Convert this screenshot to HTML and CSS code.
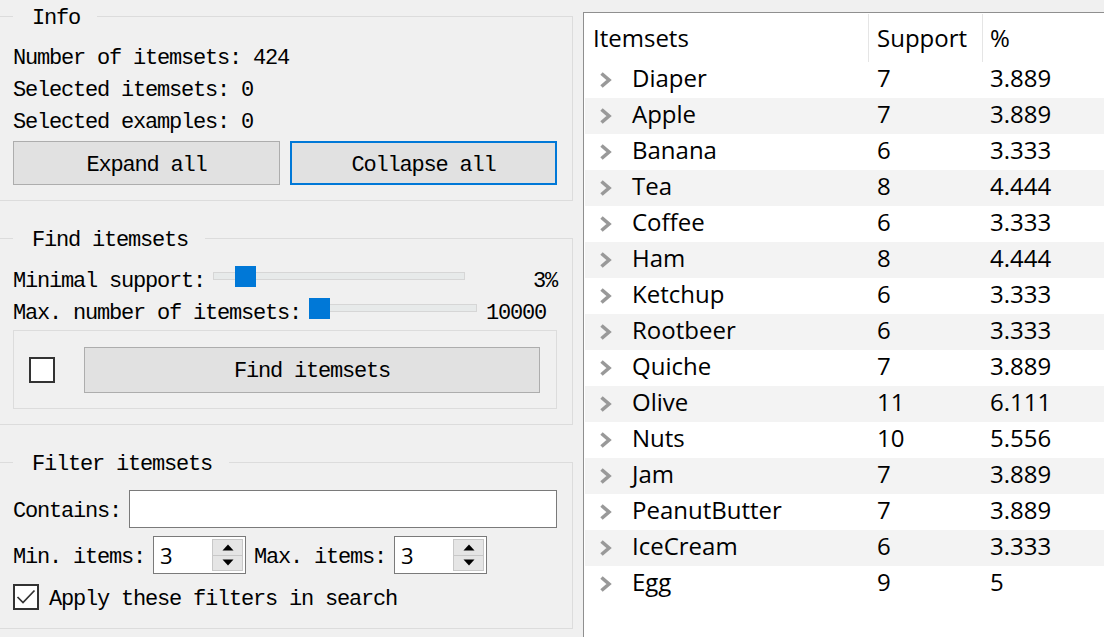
FILE: index.html
```html
<!DOCTYPE html>
<html>
<head>
<meta charset="utf-8">
<title>Frequent Itemsets</title>
<link rel="stylesheet" href="styles.css">
</head>
<body>
<div class="app">
  <div class="controls">
    <fieldset class="group info">
      <legend>Info</legend>
      <div class="line">Number of itemsets: 424</div>
      <div class="line">Selected itemsets: 0</div>
      <div class="line">Selected examples: 0</div>
      <div class="btn-row">
        <button class="btn">Expand all</button>
        <button class="btn focused">Collapse all</button>
      </div>
    </fieldset>

    <fieldset class="group find">
      <legend>Find itemsets</legend>
      <div class="slider-row">
        <span class="lbl">Minimal support:</span>
        <div class="slider"><div class="groove"></div><div class="handle" style="left:22px"></div></div>
        <span class="lbl val val-right">3%</span>
      </div>
      <div class="slider-row">
        <span class="lbl">Max. number of itemsets:</span>
        <div class="slider"><div class="groove"></div><div class="handle" style="left:0px"></div></div>
        <span class="lbl val val-left">10000</span>
      </div>
      <div class="inner-box">
        <span class="checkbox"></span>
        <button class="btn find-btn">Find itemsets</button>
      </div>
    </fieldset>

    <fieldset class="group filter">
      <legend>Filter itemsets</legend>
      <div class="contains-row">
        <span class="lbl">Contains:</span>
        <div class="text-input"></div>
      </div>
      <div class="spin-row">
        <span class="lbl">Min. items:</span>
        <div class="spinbox">
          <span class="spin-val">3</span>
          <div class="spin-btns">
            <span class="spin-btn"><svg width="12" height="7" viewBox="0 0 12 7"><path d="M0.5 6.5 L6 0.5 L11.5 6.5 Z" fill="#000"/></svg></span>
            <span class="spin-btn"><svg width="12" height="7" viewBox="0 0 12 7"><path d="M0.5 0.5 L6 6.5 L11.5 0.5 Z" fill="#000"/></svg></span>
          </div>
        </div>
        <span class="lbl">Max. items:</span>
        <div class="spinbox">
          <span class="spin-val">3</span>
          <div class="spin-btns">
            <span class="spin-btn"><svg width="12" height="7" viewBox="0 0 12 7"><path d="M0.5 6.5 L6 0.5 L11.5 6.5 Z" fill="#000"/></svg></span>
            <span class="spin-btn"><svg width="12" height="7" viewBox="0 0 12 7"><path d="M0.5 0.5 L6 6.5 L11.5 0.5 Z" fill="#000"/></svg></span>
          </div>
        </div>
      </div>
      <div class="apply-row">
        <span class="checkbox checked"><svg width="22" height="22" viewBox="0 0 22 22"><path d="M2.5 11 L8 16.5 L19.5 4.5" fill="none" stroke="#333" stroke-width="1.7"/></svg></span>
        <span class="lbl">Apply these filters in search</span>
      </div>
    </fieldset>
  </div>

  <div class="tree">
    <div class="tree-header">
      <div class="hcell">Itemsets</div>
      <div class="hcell">Support</div>
      <div class="hcell last">%</div>
    </div>
    <div class="tree-body">
      <div class="row"><div class="cell name"><svg class="chev" width="13" height="16" viewBox="0 0 13 16"><path d="M2.5 1.5 L10 8 L2.5 14.5" fill="none" stroke="#999" stroke-width="3.6"/></svg>Diaper</div><div class="cell">7</div><div class="cell">3.889</div></div>
      <div class="row alt"><div class="cell name"><svg class="chev" width="13" height="16" viewBox="0 0 13 16"><path d="M2.5 1.5 L10 8 L2.5 14.5" fill="none" stroke="#999" stroke-width="3.6"/></svg>Apple</div><div class="cell">7</div><div class="cell">3.889</div></div>
      <div class="row"><div class="cell name"><svg class="chev" width="13" height="16" viewBox="0 0 13 16"><path d="M2.5 1.5 L10 8 L2.5 14.5" fill="none" stroke="#999" stroke-width="3.6"/></svg>Banana</div><div class="cell">6</div><div class="cell">3.333</div></div>
      <div class="row alt"><div class="cell name"><svg class="chev" width="13" height="16" viewBox="0 0 13 16"><path d="M2.5 1.5 L10 8 L2.5 14.5" fill="none" stroke="#999" stroke-width="3.6"/></svg>Tea</div><div class="cell">8</div><div class="cell">4.444</div></div>
      <div class="row"><div class="cell name"><svg class="chev" width="13" height="16" viewBox="0 0 13 16"><path d="M2.5 1.5 L10 8 L2.5 14.5" fill="none" stroke="#999" stroke-width="3.6"/></svg>Coffee</div><div class="cell">6</div><div class="cell">3.333</div></div>
      <div class="row alt"><div class="cell name"><svg class="chev" width="13" height="16" viewBox="0 0 13 16"><path d="M2.5 1.5 L10 8 L2.5 14.5" fill="none" stroke="#999" stroke-width="3.6"/></svg>Ham</div><div class="cell">8</div><div class="cell">4.444</div></div>
      <div class="row"><div class="cell name"><svg class="chev" width="13" height="16" viewBox="0 0 13 16"><path d="M2.5 1.5 L10 8 L2.5 14.5" fill="none" stroke="#999" stroke-width="3.6"/></svg>Ketchup</div><div class="cell">6</div><div class="cell">3.333</div></div>
      <div class="row alt"><div class="cell name"><svg class="chev" width="13" height="16" viewBox="0 0 13 16"><path d="M2.5 1.5 L10 8 L2.5 14.5" fill="none" stroke="#999" stroke-width="3.6"/></svg>Rootbeer</div><div class="cell">6</div><div class="cell">3.333</div></div>
      <div class="row"><div class="cell name"><svg class="chev" width="13" height="16" viewBox="0 0 13 16"><path d="M2.5 1.5 L10 8 L2.5 14.5" fill="none" stroke="#999" stroke-width="3.6"/></svg>Quiche</div><div class="cell">7</div><div class="cell">3.889</div></div>
      <div class="row alt"><div class="cell name"><svg class="chev" width="13" height="16" viewBox="0 0 13 16"><path d="M2.5 1.5 L10 8 L2.5 14.5" fill="none" stroke="#999" stroke-width="3.6"/></svg>Olive</div><div class="cell">11</div><div class="cell">6.111</div></div>
      <div class="row"><div class="cell name"><svg class="chev" width="13" height="16" viewBox="0 0 13 16"><path d="M2.5 1.5 L10 8 L2.5 14.5" fill="none" stroke="#999" stroke-width="3.6"/></svg>Nuts</div><div class="cell">10</div><div class="cell">5.556</div></div>
      <div class="row alt"><div class="cell name"><svg class="chev" width="13" height="16" viewBox="0 0 13 16"><path d="M2.5 1.5 L10 8 L2.5 14.5" fill="none" stroke="#999" stroke-width="3.6"/></svg>Jam</div><div class="cell">7</div><div class="cell">3.889</div></div>
      <div class="row"><div class="cell name"><svg class="chev" width="13" height="16" viewBox="0 0 13 16"><path d="M2.5 1.5 L10 8 L2.5 14.5" fill="none" stroke="#999" stroke-width="3.6"/></svg>PeanutButter</div><div class="cell">7</div><div class="cell">3.889</div></div>
      <div class="row alt"><div class="cell name"><svg class="chev" width="13" height="16" viewBox="0 0 13 16"><path d="M2.5 1.5 L10 8 L2.5 14.5" fill="none" stroke="#999" stroke-width="3.6"/></svg>IceCream</div><div class="cell">6</div><div class="cell">3.333</div></div>
      <div class="row"><div class="cell name"><svg class="chev" width="13" height="16" viewBox="0 0 13 16"><path d="M2.5 1.5 L10 8 L2.5 14.5" fill="none" stroke="#999" stroke-width="3.6"/></svg>Egg</div><div class="cell">9</div><div class="cell">5</div></div>
    </div>
  </div>
</div>
</body>
</html>
```

FILE: styles.css
```css
html, body {
  margin: 0;
  padding: 0;
  background: #f0f0f0;
  overflow: hidden;
}
body {
  width: 1104px;
  height: 637px;
}
.app {
  display: flex;
  align-items: flex-start;
  height: 637px;
}

/* ---------- left controls ---------- */
.controls {
  width: 573px;
  flex: none;
  padding-top: 4px;
  font-family: "Liberation Mono", "Courier New", monospace;
  font-size: 22px;
  letter-spacing: -1.2px;
  color: #000;
  display: flex;
  flex-direction: column;
  gap: 25px;
}
.group {
  margin: 0;
  min-width: 0;
  border: 1px solid #dcdcdc;
  border-left: none;
  padding: 12px 15px 15px 13px;
}
.group legend {
  margin-left: 0;
  padding: 0 17px 0 19px;
  line-height: 30px;
  height: 25px;
}
.line {
  height: 32px;
  line-height: 36px;
  white-space: pre;
}
.btn-row {
  margin-top: 4px;
  display: grid;
  grid-template-columns: 1fr 1fr;
  gap: 10px;
}
.btn {
  font-family: "Liberation Mono", "Courier New", monospace;
  font-size: 22px;
  letter-spacing: -1.2px;
  color: #000;
  background: #e1e1e1;
  border: 1px solid #adadad;
  height: 44px;
  padding: 4px 0 0 0;
  margin: 0;
  white-space: pre;
}
.btn.focused {
  border: 2px solid #0078d7;
}
.lbl {
  padding-top: 4px;
  white-space: pre;
}

/* sliders */
.slider-row {
  display: flex;
  align-items: center;
  height: 32px;
}
.slider-row .lbl:first-child {
  margin-right: 8px;
}
.slider {
  flex: 1;
  position: relative;
  height: 21px;
  margin-bottom: 5px;
}
.groove {
  position: absolute;
  left: 0;
  right: 0;
  top: 6px;
  height: 6px;
  background: #e7eaea;
  border: 1px solid #d6d6d6;
}
.handle {
  position: absolute;
  top: 0;
  width: 21px;
  height: 21px;
  background: #0078d7;
}
.val-right {
  width: 92px;
  text-align: right;
}
.val-left {
  width: 71px;
  padding-left: 9px;
  text-align: left;
}

.inner-box {
  margin-top: 3px;
  height: 77px;
  border: 1px solid #dcdcdc;
  display: flex;
  align-items: center;
  padding: 0 16px 0 15px;
  gap: 29px;
}
.checkbox {
  width: 22px;
  height: 22px;
  border: 2px solid #333;
  background: #fff;
  flex: none;
  display: flex;
  align-items: center;
  justify-content: center;
}
.find-btn {
  flex: 1;
  height: 46px;
}

/* filter */
.contains-row {
  margin-top: 3px;
  display: flex;
  align-items: center;
  gap: 8px;
  height: 38px;
}
.text-input {
  flex: 1;
  height: 36px;
  background: #fff;
  border: 1px solid #7a7a7a;
}
.spin-row {
  margin-top: 8px;
  display: flex;
  align-items: center;
  gap: 8px;
  height: 38px;
}
.spinbox {
  width: 91px;
  height: 36px;
  border: 1px solid #7a7a7a;
  background: #fff;
  display: flex;
}
.spin-val {
  flex: 1;
  font-family: "Open Sans", "Noto Sans", sans-serif;
  font-size: 22px;
  letter-spacing: 0;
  line-height: 37px;
  padding-left: 6px;
}
.spin-btns {
  width: 31px;
  margin: 2px 2px 2px 0;
  display: flex;
  flex-direction: column;
}
.spin-btn {
  flex: 1;
  background: #e5e5e5;
  border: 1px solid #c8c8c8;
  display: flex;
  align-items: center;
  justify-content: center;
}
.spin-btn + .spin-btn {
  border-top: none;
}
.apply-row {
  margin-top: 10px;
  display: flex;
  align-items: center;
  gap: 10px;
  height: 26px;
  padding-bottom: 3px;
}

/* ---------- right tree ---------- */
.tree {
  margin-left: 10px;
  margin-top: 12px;
  flex: 1;
  height: 625px;
  background: #fff;
  border-top: 1px solid #8f8f8f;
  border-left: 1px solid #8f8f8f;
  font-family: "Open Sans", "Noto Sans", sans-serif;
  font-size: 24px;
  color: #000;
}
.tree-header {
  display: grid;
  grid-template-columns: 285px 114px 1fr;
  height: 49px;
}
.hcell {
  border-right: 1px solid #e5e5e5;
  padding-left: 9px;
  line-height: 48px;
  margin-top: 1px;
  height: 48px;
}
.hcell:nth-child(2) {
  padding-left: 8px;
}
.hcell.last {
  border-right: none;
  padding-left: 7px;
}
.tree-body {
  margin-left: 1px;
}
.row {
  display: grid;
  grid-template-columns: 284px 114px 1fr;
  height: 36px;
  align-items: start;
}
.row.alt {
  background: #f3f3f3;
}
.cell {
  padding-left: 8px;
  white-space: nowrap;
  line-height: 32px;
  height: 32px;
}
.cell.name {
  padding-left: 14px;
  display: flex;
  align-items: center;
}
.chev {
  margin-right: 20px;
  flex: none;
  margin-top: 4px;
}
.row .cell:nth-child(3) {
  padding-left: 7px;
}
```
